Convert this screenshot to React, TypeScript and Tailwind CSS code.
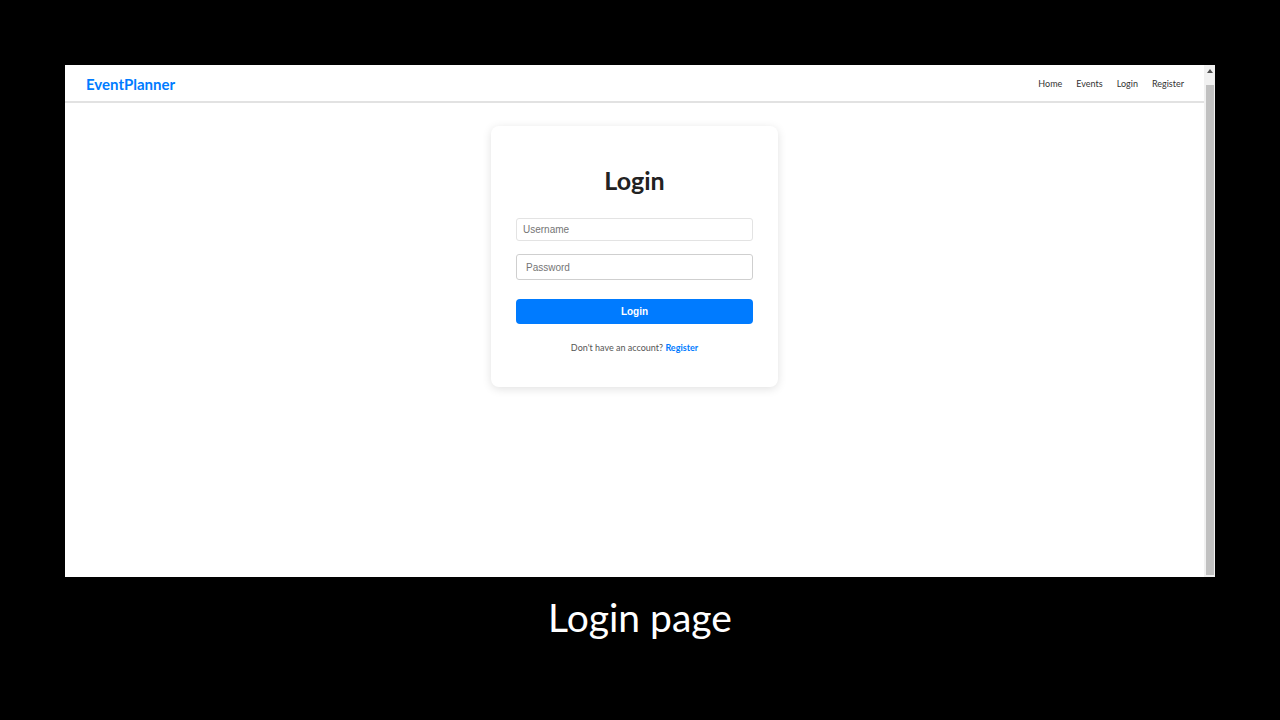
export default function App() {
  const links = ["Home", "Events", "Login", "Register"];
  return (
    <div className="flex h-[720px] w-[1280px] flex-col items-center bg-black font-['Lato',sans-serif]">
      <div className="mt-[65px] flex h-[512px] w-[1150px] bg-white">
        <div className="flex flex-1 flex-col">
          <nav className="flex h-[38px] items-center justify-between border-b-2 border-[#e2e2e2] pl-[21px] pr-[20px] pt-[2px]">
            <span className="text-[15px] font-bold text-[#007bff]">EventPlanner</span>
            <ul className="flex gap-[14px] text-[9px] text-[#333]">
              {links.map((item) => (
                <li key={item}>{item}</li>
              ))}
            </ul>
          </nav>
          <div className="flex justify-center pt-[23px]">
            <div className="flex w-[287px] flex-col rounded-lg bg-white px-[25px] pb-[33px] pt-[39px] shadow-[0_2px_10px_rgba(0,0,0,0.12)]">
              <h1 className="text-center text-[25px] font-bold leading-[30px] text-[#222]">Login</h1>
              <input
                className="mt-[23px] h-[23px] w-full rounded-[3px] border border-[#e3e3e3] px-[6px] font-['Liberation_Sans',sans-serif] text-[10px] outline-none placeholder:text-[#757575]"
                placeholder="Username"
              />
              <input
                type="password"
                className="mt-[13px] h-[26px] w-full rounded-[3px] border border-[#cfcfcf] px-[9px] font-['Liberation_Sans',sans-serif] text-[10px] outline-none placeholder:text-[#757575]"
                placeholder="Password"
              />
              <button className="mt-[19px] h-[25px] w-full rounded-[4px] bg-[#007bff] font-['Liberation_Sans',sans-serif] text-[10px] font-bold text-white">
                Login
              </button>
              <p className="mt-[18px] text-center text-[9px] leading-[12px] text-[#555]">
                Don&apos;t have an account?{" "}
                <span className="font-bold text-[#007bff]">Register</span>
              </p>
            </div>
          </div>
        </div>
        <div className="flex w-[11px] flex-col bg-[#f1f1f1]">
          <div className="flex h-[20px] items-start justify-center pt-[4px]">
            <svg width="6" height="4" viewBox="0 0 6 4">
              <path d="M3 0 L6 4 L0 4 Z" fill="#505050" />
            </svg>
          </div>
          <div className="mx-auto mb-[2px] w-[8px] flex-1 bg-[#c1c1c1]" />
        </div>
      </div>
      <p className="mt-[17px] text-[39px] leading-[46px] text-white">Login page</p>
    </div>
  );
}
